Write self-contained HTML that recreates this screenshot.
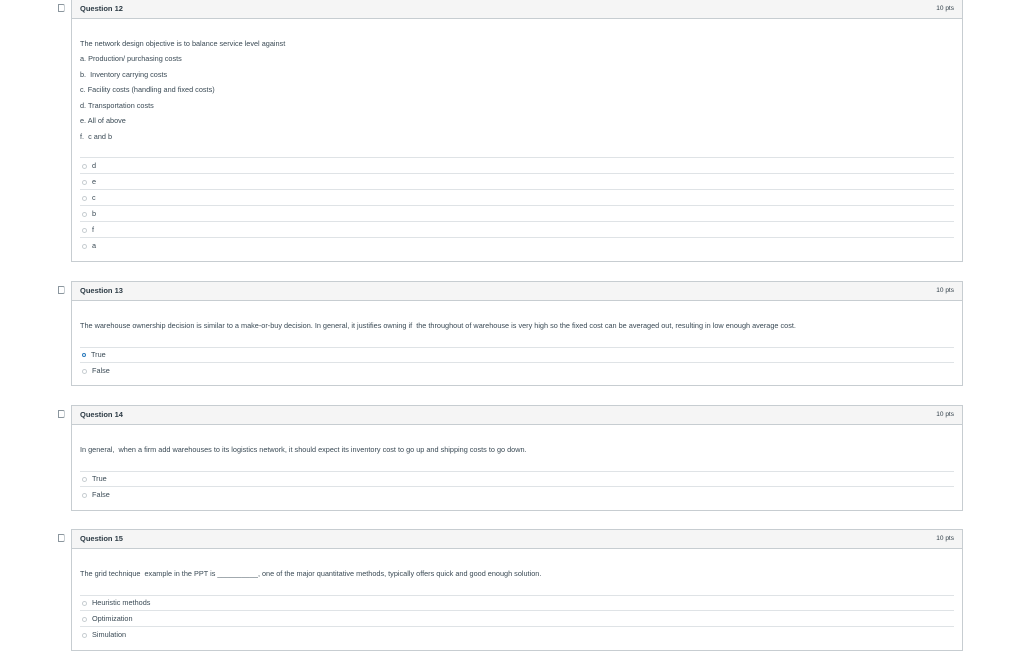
<!DOCTYPE html>
<html><head><style>
body{margin:0;width:1024px;height:661px;background:#fff;font-family:"Liberation Sans",sans-serif;color:#2d3b45;position:relative;overflow:hidden}
.card{position:absolute;left:71px;width:892px;border:1px solid #c7cdd1;box-sizing:border-box}
.hd{position:absolute;left:0;right:0;top:0;height:18px;background:#f5f5f5;border-bottom:1px solid #c7cdd1;font-size:7.5px;font-weight:bold}
.hd .q{position:absolute;left:8px;top:4px}
.hd .p{position:absolute;right:8px;top:5px;font-weight:normal;font-size:6.5px}
.t{position:absolute;font-size:7.3px;white-space:nowrap;color:#3a4a55;line-height:9px}
.ln{position:absolute;left:8px;right:8px;height:1px;background:#dfe3e6}
.rd{display:inline-block;width:3px;height:3px;border:1px solid #c7cdd1;border-radius:50%;margin-right:5px;vertical-align:middle}
.sel{border:1.5px solid #2b7abc;width:2px;height:2px}
.flag{position:absolute;left:58px;width:5px;height:6px;border:1px solid #8b969e;border-right-color:#c7cdd1;border-radius:0 2px 2px 0}
</style></head><body>

<div class="flag" style="top:4px"></div>
<div class="card" style="top:-1px;height:263px">
<div class="hd"><span class="q">Question 12</span><span class="p">10 pts</span></div>
<div class="t" style="left:8px;top:39px">The network design objective is to balance service level against</div>
<div class="t" style="left:8px;top:54px">a. Production/ purchasing costs</div>
<div class="t" style="left:8px;top:70px">b.&nbsp; Inventory carrying costs</div>
<div class="t" style="left:8px;top:85px">c. Facility costs (handling and fixed costs)</div>
<div class="t" style="left:8px;top:101px">d. Transportation costs</div>
<div class="t" style="left:8px;top:116px">e. All of above</div>
<div class="t" style="left:8px;top:132px">f.&nbsp; c and b</div>
<div class="ln" style="top:157px"></div><div class="t" style="left:10px;top:161px"><span class="rd"></span>d</div>
<div class="ln" style="top:173px"></div><div class="t" style="left:10px;top:177px"><span class="rd"></span>e</div>
<div class="ln" style="top:189px"></div><div class="t" style="left:10px;top:193px"><span class="rd"></span>c</div>
<div class="ln" style="top:205px"></div><div class="t" style="left:10px;top:209px"><span class="rd"></span>b</div>
<div class="ln" style="top:221px"></div><div class="t" style="left:10px;top:225px"><span class="rd"></span>f</div>
<div class="ln" style="top:237px"></div><div class="t" style="left:10px;top:241px"><span class="rd"></span>a</div>
</div>

<div class="flag" style="top:286px"></div>
<div class="card" style="top:281px;height:105px">
<div class="hd"><span class="q">Question 13</span><span class="p">10 pts</span></div>
<div class="t" style="left:8px;top:39px">The warehouse ownership decision is similar to a make-or-buy decision. In general, it justifies owning if&nbsp; the throughout of warehouse is very high so the fixed cost can be averaged out, resulting in low enough average cost.</div>
<div class="ln" style="top:65px"></div><div class="t" style="left:10px;top:68px"><span class="rd sel"></span>True</div>
<div class="ln" style="top:80px"></div><div class="t" style="left:10px;top:84px"><span class="rd"></span>False</div>
</div>

<div class="flag" style="top:410px"></div>
<div class="card" style="top:405px;height:106px">
<div class="hd"><span class="q">Question 14</span><span class="p">10 pts</span></div>
<div class="t" style="left:8px;top:39px">In general,&nbsp; when a firm add warehouses to its logistics network, it should expect its inventory cost to go up and shipping costs to go down.</div>
<div class="ln" style="top:65px"></div><div class="t" style="left:10px;top:68px"><span class="rd"></span>True</div>
<div class="ln" style="top:80px"></div><div class="t" style="left:10px;top:84px"><span class="rd"></span>False</div>
</div>

<div class="flag" style="top:534px"></div>
<div class="card" style="top:529px;height:122px">
<div class="hd"><span class="q">Question 15</span><span class="p">10 pts</span></div>
<div class="t" style="left:8px;top:39px">The grid technique&nbsp; example in the PPT is __________, one of the major quantitative methods, typically offers quick and good enough solution.</div>
<div class="ln" style="top:65px"></div><div class="t" style="left:10px;top:68px"><span class="rd"></span>Heuristic methods</div>
<div class="ln" style="top:80px"></div><div class="t" style="left:10px;top:84px"><span class="rd"></span>Optimization</div>
<div class="ln" style="top:96px"></div><div class="t" style="left:10px;top:100px"><span class="rd"></span>Simulation</div>
</div>
</body></html>
